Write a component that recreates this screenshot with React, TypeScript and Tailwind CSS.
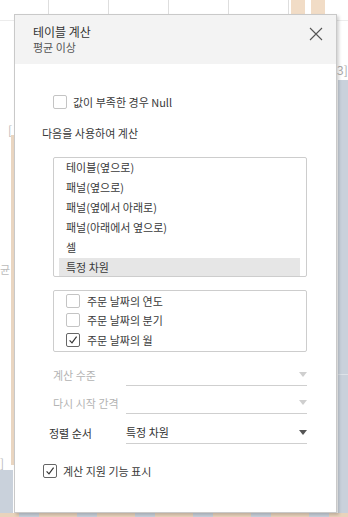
import React from 'react';

const Check = ({ checked = false }: { checked?: boolean }) => (
  <span
    className={`w-[14px] h-[14px] shrink-0 border rounded-[2px] bg-white flex items-center justify-center ${
      checked ? 'border-[#666]' : 'border-[#c4c4c4]'
    }`}
  >
    {checked && (
      <svg width="10" height="10" viewBox="0 0 10 10">
        <path d="M1.6 5.3 L4 7.8 L8.6 1.6" stroke="#333" strokeWidth="1.2" fill="none" />
      </svg>
    )}
  </span>
);

const Arrow = ({ dim }: { dim?: boolean }) => (
  <svg width="8" height="5" viewBox="0 0 8 5" className="shrink-0">
    <path d="M0 0 H8 L4 5 Z" fill={dim ? '#cfcfcf' : '#555'} />
  </svg>
);

const DropRow = ({ label, value, dim, className }: { label: string; value?: string; dim?: boolean; className: string }) => (
  <div className={`flex items-end ${className}`}>
    <span className={`h-[22px] flex items-center ${dim ? 'w-[73px] text-[#b3b3b3]' : 'text-[#333] -ml-[4px] w-[77px]'}`}>{label}</span>
    <div className="w-[181px] h-[22px] border-b border-[#cfcfcf] flex items-center justify-between">
      <span className="text-[#333]">{value}</span>
      <Arrow dim={dim} />
    </div>
  </div>
);

export default function App() {
  const calcItems = ['테이블(옆으로)', '패널(옆으로)', '패널(옆에서 아래로)', '패널(아래에서 옆으로)', '셀', '특정 차원'];
  const dims = [
    { name: '주문 날짜의 연도', on: false },
    { name: '주문 날짜의 분기', on: false },
    { name: '주문 날짜의 월', on: true },
  ];

  return (
    <div className="relative w-[348px] h-[517px] overflow-hidden bg-white font-[Noto_Sans_CJK_KR,sans-serif] text-[11px] text-[#3a3a3a]">
      {/* sheet behind the dialog */}
      <div className="absolute left-[48px] top-0 w-px h-[14px] bg-[#dedede]" />
      <div className="absolute left-[108px] top-0 w-px h-[14px] bg-[#dedede]" />
      <div className="absolute left-[168px] top-0 w-px h-[14px] bg-[#dedede]" />
      <div className="absolute left-[228px] top-0 w-px h-[14px] bg-[#dedede]" />
      <div className="absolute left-[288px] top-0 w-px h-[14px] bg-[#dedede]" />
      <div className="absolute left-[291px] top-0 w-[14px] h-[14px] bg-[#f1dcc6]" />
      <div className="absolute left-[311px] top-0 w-[14px] h-[14px] bg-[#f1dcc6]" />
      <div className="absolute left-0 top-[20px] w-full h-px bg-[#ececec]" />
      <div className="absolute left-[337px] top-[63px] text-[12px] text-[#aaa] leading-[14px]">3]</div>
      <div className="absolute left-[338px] top-[80px] w-[10px] h-[437px] bg-[#c9d1db]" />
      <div className="absolute left-[338px] top-[374px] w-[10px] h-px bg-[#dde2e8]" />
      <div className="absolute left-[8px] top-[123px] text-[12px] text-[#bbb] leading-[14px]">[</div>
      <div className="absolute left-[11px] top-[135px] w-[3px] h-[330px] bg-[#ead6c1]" />
      <div className="absolute left-0 top-[262px] text-[11px] text-[#bbb] leading-[14px]">균</div>
      <div className="absolute left-0 top-[456px] text-[12px] text-[#bbb] leading-[14px]">]</div>
      <div className="absolute left-0 top-[470px] w-[13px] h-[47px] bg-[#c9d1db]" />
      <div className="absolute left-0 top-[513px] w-full h-[4px] flex">
        {Array.from({ length: 18 }).map((_, i) => (
          <div key={i} className={`w-[20px] h-full ${i % 3 === 1 ? 'bg-[#c9d1db]' : 'bg-[#e9d3bc]'}`} />
        ))}
      </div>

      {/* dialog */}
      <div className="absolute left-[14px] top-[14px] w-[323px] h-[499px] bg-white border border-[#c9c9c9] shadow-[2px_2px_3px_rgba(0,0,0,0.18)] flex flex-col">
        <div className="h-[49px] bg-[#f3f3f3] flex justify-between pl-[18px] pr-[13px] pt-[9px]">
          <div className="flex flex-col">
            <span className="text-[12px] leading-[15px] text-[#333]">테이블 계산</span>
            <span className="text-[11px] leading-[14px] mt-[1px] text-[#555]">평균 이상</span>
          </div>
          <svg width="14" height="14" viewBox="0 0 14 14" className="mt-[3px]">
            <path d="M1 1 L13 13 M13 1 L1 13" stroke="#555" strokeWidth="1.1" />
          </svg>
        </div>

        <div className="flex items-center gap-[6px] h-[16px] mt-[30px] ml-[38px]">
          <Check />
          <span>값이 부족한 경우 Null</span>
        </div>

        <div className="h-[16px] leading-[16px] mt-[15px] ml-[27px]">다음을 사용하여 계산</div>

        <div className="mt-[16px] ml-[38px] w-[254px] h-[120px] border border-[#cdcdcd] rounded-[2px] overflow-hidden">
          {calcItems.map((t, i) => (
            <div
              key={t}
              className={`h-[20px] leading-[19px] ml-[5px] mr-[6px] pl-[7px] ${i === calcItems.length - 1 ? 'bg-[#e6e6e6]' : ''}`}
            >
              {t}
            </div>
          ))}
        </div>

        <div className="mt-[13px] ml-[38px] w-[254px] h-[62px] border border-[#cdcdcd] rounded-[2px]">
          {dims.map((d) => (
            <div key={d.name} className="h-[19.5px] flex items-center gap-[7px] pl-[12px]">
              <Check checked={d.on} />
              <span>{d.name}</span>
            </div>
          ))}
        </div>

        <div className="ml-[38px]">
          <DropRow className="mt-[12px]" label="계산 수준" dim />
          <DropRow className="mt-[6px]" label="다시 시작 간격" dim />
          <DropRow className="mt-[8px]" label="정렬 순서" value="특정 차원" />
        </div>

        <div className="flex items-center gap-[6px] h-[16px] mt-[19px] ml-[28px]">
          <Check checked />
          <span>계산 지원 기능 표시</span>
        </div>
      </div>
    </div>
  );
}
